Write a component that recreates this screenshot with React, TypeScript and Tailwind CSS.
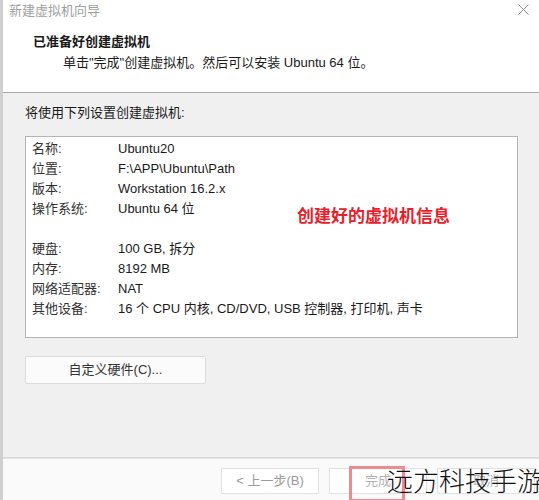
import React from 'react'

const rows: [string, string][] = [
    ['名称:', 'Ubuntu20'],
    ['位置:', 'F:\\APP\\Ubuntu\\Path'],
    ['版本:', 'Workstation 16.2.x'],
    ['操作系统:', 'Ubuntu 64 位'],
    ['', ''],
    ['硬盘:', '100 GB, 拆分'],
    ['内存:', '8192 MB'],
    ['网络适配器:', 'NAT'],
    ['其他设备:', '16 个 CPU 内核, CD/DVD, USB 控制器, 打印机, 声卡'],
]

const font = { fontFamily: '"Liberation Sans", "Noto Sans CJK SC", sans-serif' }

const App: React.FC = () => {
    return (
        <div
            className="relative w-[539px] h-[500px] overflow-hidden bg-white border-l-[3px] border-[#cfcfcf] text-[13px] text-[#1a1a1a]"
            style={font}
        >
            {/* title bar */}
            <div className="flex h-[22px] items-center justify-between pl-[6px] pr-[10px]">
                <span className="text-[13px] text-[#a0a0a0]">新建虚拟机向导</span>
                <svg width="11" height="11" viewBox="0 0 11 11" className="mt-[-4px]">
                    <path d="M0.5 0.5 L10.5 10.5 M10.5 0.5 L0.5 10.5" stroke="#8a8a8a" strokeWidth="1" />
                </svg>
            </div>

            {/* header */}
            <div className="h-[71px] pt-[11px] border-b border-[#a8a8a8]">
                <div className="pl-[30px] font-bold leading-[18px]">已准备好创建虚拟机</div>
                <div className="pl-[60px] mt-[3px] leading-[18px]">
                    单击"完成"创建虚拟机。然后可以安装 Ubuntu 64 位。
                </div>
            </div>

            {/* body */}
            <div className="h-[365px] bg-[#f0f0f0] pl-[22px] pr-[21px] pt-[11px] border-b border-[#d8d8d8]">
                <div className="leading-[18px]">将使用下列设置创建虚拟机:</div>
                <div className="relative mt-[14px] h-[202px] bg-white border border-[#b4b4b4] pl-[6px] pt-[2px]">
                    {rows.map(([k, v], i) => (
                        <div key={i} className="flex h-[20px] items-center">
                            <span className="w-[86px] text-[#333]">{k}</span>
                            <span>{v}</span>
                        </div>
                    ))}
                    <div className="absolute left-[271px] top-[67px] text-[17px] font-bold text-[#e8202a] whitespace-nowrap">
                        创建好的虚拟机信息
                    </div>
                </div>
                <button className="mt-[18px] w-[181px] h-[28px] bg-[#fbfbfb] border border-[#dcdcdc] rounded-[2px] text-[13px] text-[#333]">
                    自定义硬件(C)...
                </button>
            </div>

            {/* footer */}
            <div className="h-[42px] bg-[#fafafa] border-t border-[#e4e4e4] flex items-start pt-[9px] pl-[218px] gap-[10px]">
                <button className="w-[98px] h-[26px] shrink-0 bg-white border border-[#e2e2e2] text-[13px] text-[#9a9a9a]">
                    &lt; 上一步(B)
                </button>
                <button className="w-[98px] h-[26px] shrink-0 bg-white border border-[#e2e2e2] text-[13px] text-[#b0b0b0]">
                    完成
                </button>
                <button className="w-[98px] h-[26px] shrink-0 bg-white border border-[#e2e2e2] text-[13px] text-[#b0b0b0]">
                    取消
                </button>
            </div>

            {/* annotation overlays */}
            <div className="absolute left-[346px] top-[466px] w-[56px] h-[36px] border-[3px] border-[#ef8a90]" />
            <div
                className="absolute left-[384px] top-[463px] text-[26px] leading-[34px] text-[#111] whitespace-nowrap"
                style={{ fontFamily: '"Noto Sans CJK SC", sans-serif', fontWeight: 300 }}
            >
                远方科技手游
            </div>
        </div>
    )
}

export default App
